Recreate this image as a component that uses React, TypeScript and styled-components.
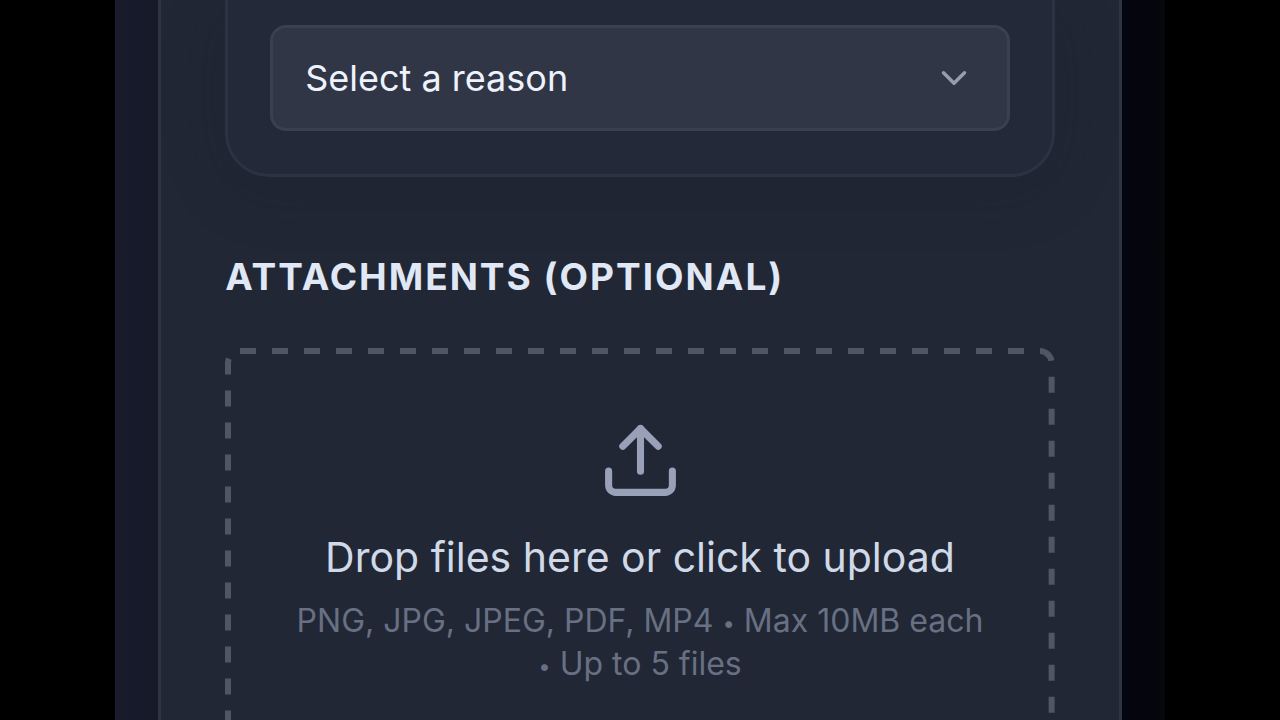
import React from "react";
import styled, { createGlobalStyle } from "styled-components";
import { ChevronDown, Upload } from "lucide-react";

const GlobalStyle = createGlobalStyle`
  *, *::before, *::after { box-sizing: border-box; }
  body {
    margin: 0;
    background: #000;
    font-family: Inter, "Liberation Sans", sans-serif;
  }
`;

const Screen = styled.div`
  height: 100vh;
  overflow: hidden;
  padding: 0 9%;
  background: #000;
`;

const Backdrop = styled.div`
  display: flex;
  min-height: 100%;
  padding: 0 43px;
  background: linear-gradient(90deg, #1a1b2c 0, #151a29 43px, #04050f 96%, #06070b 100%);
`;

const Sheet = styled.form`
  flex: 1;
  min-width: 0;
  padding: 0 64px 64px;
  border: solid #2f3443;
  border-width: 0 3px;
  background: #212735;
`;

const Panel = styled.section`
  padding: 25px 42px 43px;
  border: 3px solid #2d3241;
  border-top: 0;
  border-radius: 0 0 44px 44px;
  background: #232938;
  box-shadow: 0 12px 60px rgba(28, 30, 44, 0.25);
`;

const SelectField = styled.div`
  display: grid;
  align-items: center;

  > * { grid-area: 1 / 1; }

  > svg {
    justify-self: end;
    margin-right: 35px;
    color: #979daf;
    pointer-events: none;
  }
`;

const ReasonSelect = styled.select`
  appearance: none;
  width: 100%;
  height: 106px;
  padding: 0 88px 0 32px;
  border: 3px solid #3b404f;
  border-radius: 16px;
  background: #313646;
  color: #edf2fd;
  font: 400 36px/48px Inter, "Liberation Sans", sans-serif;
`;

const SectionTitle = styled.h2`
  margin: 76px 0 48px;
  color: #e0e7f5;
  font-size: 37px;
  font-weight: 700;
  line-height: 47px;
  letter-spacing: 2px;
  text-transform: uppercase;
`;

const DropZone = styled.label`
  position: relative;
  display: flex;
  flex-direction: column;
  align-items: center;
  padding: 70px 64px 71px;
  color: #98a1b8;
  text-align: center;
  cursor: pointer;
`;

const DashedOutline = styled.svg`
  position: absolute;
  inset: 0;
  width: 100%;
  height: 100%;

  rect {
    width: calc(100% - 6px);
    height: calc(100% - 6px);
  }
`;

const FileInput = styled.input`
  position: absolute;
  inset: 0;
  width: 100%;
  height: 100%;
  opacity: 0;
  cursor: pointer;
`;

const DropTitle = styled.span`
  margin-top: 26px;
  color: #d0d9e8;
  font-size: 41px;
  line-height: 56px;
`;

const DropHint = styled.span`
  margin-top: 14px;
  color: #687083;
  font-size: 32px;
  line-height: 43px;
`;

const Bullet = styled.span`
  font-size: 22px;
  line-height: 1;
  vertical-align: middle;
`;

export default function App() {
  return (
    <>
      <GlobalStyle />
      <Screen>
        <Backdrop>
          <Sheet>
            <Panel>
              <SelectField>
                <ReasonSelect aria-label="Reason" defaultValue="">
                  <option value="">Select a reason</option>
                </ReasonSelect>
                <ChevronDown size={42} aria-hidden="true" />
              </SelectField>
            </Panel>
            <SectionTitle>Attachments (optional)</SectionTitle>
            <DropZone>
              <DashedOutline aria-hidden="true">
                <rect x="3" y="3" rx="12" fill="none" stroke="#505665" strokeWidth="6" strokeDasharray="16 16" />
              </DashedOutline>
              <Upload size={85} aria-hidden="true" />
              <DropTitle>Drop files here or click to upload</DropTitle>
              <DropHint>
                PNG, JPG, JPEG, PDF, MP4 <Bullet>•</Bullet> Max 10MB each <Bullet>•</Bullet> Up to 5 files
              </DropHint>
              <FileInput type="file" multiple accept=".png,.jpg,.jpeg,.pdf,.mp4" />
            </DropZone>
          </Sheet>
        </Backdrop>
      </Screen>
    </>
  );
}
